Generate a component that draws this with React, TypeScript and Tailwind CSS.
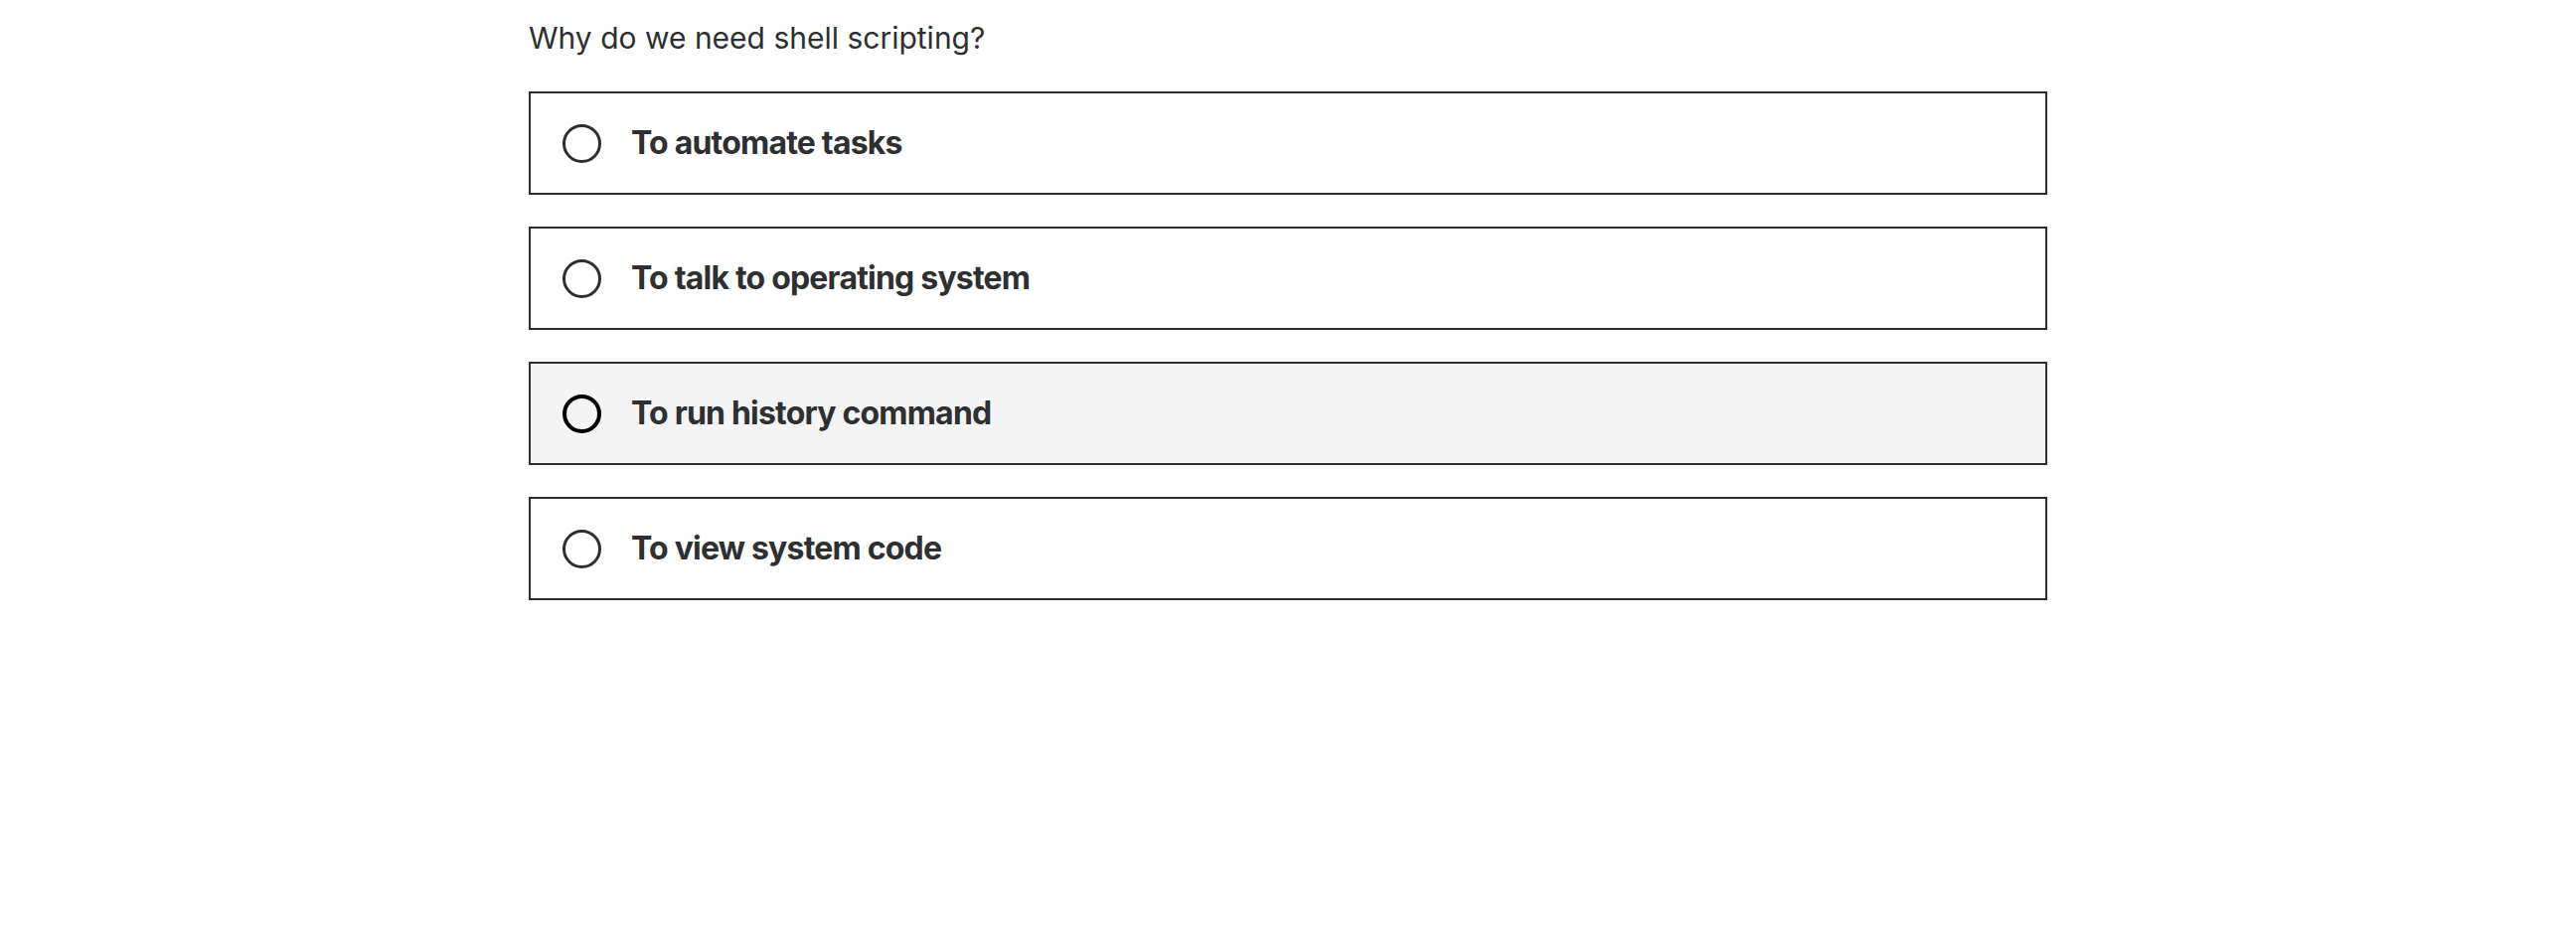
const options = [
  "To automate tasks",
  "To talk to operating system",
  "To run history command",
  "To view system code",
];

function Option({ label, hovered }: { label: string; hovered?: boolean }) {
  return (
    <label
      className={`flex h-[104px] items-center gap-[30px] border-2 border-[#2d2f31] px-8 ${
        hovered ? "bg-[#f4f4f4]" : "bg-white"
      }`}
    >
      <span
        className={`h-[39px] w-[39px] shrink-0 rounded-full ${
          hovered ? "border-[4px] border-black" : "border-[3px] border-[#2d2f31]"
        }`}
      />
      <span className="text-[32px] font-bold tracking-[-0.8px] text-[#2d2f31]">{label}</span>
    </label>
  );
}

export default function App() {
  return (
    <div className="min-h-screen bg-white font-['Inter',sans-serif]">
      <div className="mx-auto w-[1528px] pt-[16px]">
        <p className="text-[30px] leading-[44px] text-[#2d2f31]">Why do we need shell scripting?</p>
        <div className="mt-[32px] flex flex-col gap-8">
          {options.map((o, i) => (
            <Option key={o} label={o} hovered={i === 2} />
          ))}
        </div>
      </div>
    </div>
  );
}
